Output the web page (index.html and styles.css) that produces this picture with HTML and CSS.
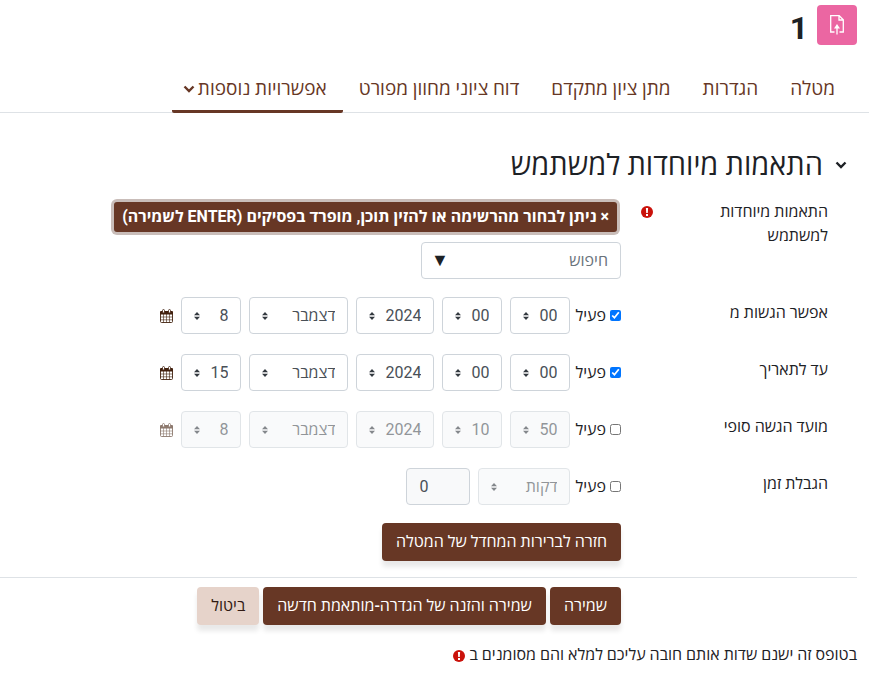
FILE: index.html
```html
<!DOCTYPE html>
<html lang="he" dir="rtl">
<head>
<meta charset="utf-8">
<meta name="viewport" content="width=device-width, initial-scale=1">
<title>התאמות מיוחדות למשתמש</title>
<link rel="stylesheet" href="styles.css">
</head>
<body>
<svg class="sprite" aria-hidden="true">
  <symbol id="calendar" viewBox="0 0 13 14">
    <path fill="currentColor" d="M1 2h11q1 0 1 1v2.500H0V3q0-1 1-1z"/>
    <path fill="none" stroke="currentColor" stroke-width=".9" d="M.5 5v7.500q0 1 1 1h10q1 0 1-1V5"/>
    <path fill="none" stroke="currentColor" stroke-width=".6" d="M3.500 5v8.500M6.500 5v8.500M9.500 5v8.500M.5 8h12M.5 10.800h12"/>
    <rect x="2.500" y=".5" width="2" height="3.500" rx="1" fill="#fff" stroke="currentColor" stroke-width=".8"/>
    <rect x="8.500" y=".5" width="2" height="3.500" rx="1" fill="#fff" stroke="currentColor" stroke-width=".8"/>
  </symbol>
  <symbol id="required" viewBox="0 0 12 12">
    <circle cx="6" cy="6" r="6" fill="#ca120b"/>
    <path fill="#fff" d="M4.900 2h2.200l-.3 5h-1.600zM5 8h2v2h-2z"/>
  </symbol>
  <symbol id="chevron" viewBox="0 0 12 8">
    <path d="M1.500 1.500L6 6l4.500-4.500" fill="none" stroke="currentColor" stroke-width="2.400"/>
  </symbol>
</svg>

<header class="page-header">
  <span class="activity-icon">
    <svg width="16" height="22" viewBox="0 0 16 22" fill="none" stroke="#fff" stroke-width="1.300">
      <path d="M5.500 18H1.700V1.700h8.500l4.100 4.100V18h-3.800M10 1.700v4.300h4.300M8 20.500v-8"/>
      <path fill="#fff" stroke="none" d="M8 10l3 4.500H5z"/>
    </svg>
  </span>
  <h1>1</h1>
</header>

<nav class="tabs">
  <a href="#">מטלה</a>
  <a href="#">הגדרות</a>
  <a href="#">מתן ציון מתקדם</a>
  <a href="#">דוח ציוני מחוון מפורט</a>
  <a href="#" class="active">אפשרויות נוספות<svg class="chevron"><use href="#chevron"/></svg></a>
</nav>

<form>
  <h2><svg class="chevron"><use href="#chevron"/></svg>התאמות מיוחדות למשתמש</h2>

  <div class="row tight top">
    <div class="row-label">
      <label for="user">התאמות מיוחדות למשתמש</label>
      <svg class="required"><use href="#required"/></svg>
    </div>
    <div class="picker">
      <button type="button" class="tag">× ניתן לבחור מהרשימה או להזין תוכן, מופרד בפסיקים (ENTER לשמירה)</button>
      <div class="search">
        <input id="user" type="text" placeholder="חיפוש">
        <span class="arrow">▼</span>
      </div>
    </div>
  </div>

  <div class="row">
    <div class="row-label"><span>אפשר הגשות מ</span></div>
    <div class="fields">
      <label class="check"><input type="checkbox" checked>פעיל</label>
      <select aria-label="דקה"><option>00</option></select>
      <select aria-label="שעה"><option>00</option></select>
      <select class="year" aria-label="שנה"><option>2024</option></select>
      <select class="month" aria-label="חודש"><option>דצמבר</option></select>
      <select aria-label="יום"><option>8</option></select>
      <a href="#" class="calendar" aria-label="לוח שנה"><svg><use href="#calendar"/></svg></a>
    </div>
  </div>

  <div class="row">
    <div class="row-label"><span>עד לתאריך</span></div>
    <div class="fields">
      <label class="check"><input type="checkbox" checked>פעיל</label>
      <select aria-label="דקה"><option>00</option></select>
      <select aria-label="שעה"><option>00</option></select>
      <select class="year" aria-label="שנה"><option>2024</option></select>
      <select class="month" aria-label="חודש"><option>דצמבר</option></select>
      <select aria-label="יום"><option>15</option></select>
      <a href="#" class="calendar" aria-label="לוח שנה"><svg><use href="#calendar"/></svg></a>
    </div>
  </div>

  <div class="row">
    <div class="row-label"><span>מועד הגשה סופי</span></div>
    <div class="fields">
      <label class="check"><input type="checkbox">פעיל</label>
      <select disabled aria-label="דקה"><option>50</option></select>
      <select disabled aria-label="שעה"><option>10</option></select>
      <select disabled class="year" aria-label="שנה"><option>2024</option></select>
      <select disabled class="month" aria-label="חודש"><option>דצמבר</option></select>
      <select disabled aria-label="יום"><option>8</option></select>
      <a href="#" class="calendar muted" aria-label="לוח שנה"><svg><use href="#calendar"/></svg></a>
    </div>
  </div>

  <div class="row tight">
    <div class="row-label"><label for="limit">הגבלת זמן</label></div>
    <div class="fields">
      <label class="check"><input type="checkbox">פעיל</label>
      <select disabled class="unit" aria-label="יחידת זמן"><option>דקות</option></select>
      <input id="limit" class="number" type="text" dir="ltr" value="0" disabled>
    </div>
  </div>

  <div class="actions">
    <button type="button" class="btn">חזרה לברירות המחדל של המטלה</button>
  </div>
  <hr>
  <div class="actions">
    <button type="submit" class="btn">שמירה</button>
    <button type="submit" class="btn">שמירה והזנה של הגדרה-מותאמת חדשה</button>
    <button type="button" class="btn light">ביטול</button>
  </div>
  <p class="note">בטופס זה ישנם שדות אותם חובה עליכם למלא והם מסומנים ב <svg class="required"><use href="#required"/></svg></p>
</form>
</body>
</html>
```
FILE: styles.css
```css
* { box-sizing: border-box; }

body {
  margin: 0;
  padding: 5px 33px 0 0;
  background: #fff;
  color: #1d2125;
  font: 16px/24px Roboto, "Open Sans", "Liberation Sans", sans-serif;
}

.sprite { display: none; }

button, input, select { font: inherit; margin: 0; }

.page-header { display: flex; align-items: center; gap: 9px; height: 40px; }

.activity-icon {
  display: flex;
  align-items: center;
  justify-content: center;
  width: 40px;
  height: 40px;
  border-radius: 4px;
  background: #eb66a2;
}

h1 { margin: 6px 0 0; font-size: 32px; line-height: 40px; font-weight: 700; }

.tabs {
  display: flex;
  margin: 20px -12px 0 0;
  padding-right: 18px;
  border-bottom: 1px solid #dee2e6;
  font-size: 19px;
}

.tabs a {
  display: flex;
  align-items: center;
  height: 48px;
  margin-bottom: -1px;
  padding: 2px 16px 0;
  border-bottom: 3px solid transparent;
  color: #673725;
  text-decoration: none;
  white-space: nowrap;
}

.tabs .active { padding-left: 11px; gap: 3px; border-color: #673725; border-radius: 2px; }

.chevron { width: 12px; height: 8px; flex: none; }

h2 {
  display: flex;
  align-items: center;
  gap: 12px;
  margin: 34px 0 16px;
  padding-right: 10px;
  font-size: 29px;
  line-height: 36px;
  font-weight: 400;
}

.row { display: flex; gap: 15px; margin-bottom: 20px; padding-right: 29px; }
.tight { margin-bottom: 18px; }

.row-label {
  display: flex;
  flex: none;
  justify-content: space-between;
  width: 192px;
  padding: 4px 0 0 5px;
}

.top .row-label { padding-top: 1px; }

.row-label label { max-width: 130px; }

.required { width: 12px; height: 12px; flex: none; }
.row-label .required { margin-top: 6px; }

.picker { padding-top: 3px; }

.tag {
  display: block;
  margin: 0 4px 10px 0;
  padding: 3px 8px;
  border: 0;
  border-radius: 3px;
  background: #673725;
  box-shadow: 0 0 0 3px #c9bdb9;
  color: #fff;
  font-weight: 700;
  white-space: nowrap;
}

.search { position: relative; width: 200px; }

.search input, select, .number {
  height: 37px;
  padding: 0 12px;
  border: 1px solid #ced4da;
  border-radius: 4px;
  background: #fff;
  color: #495057;
}

.search input { display: block; width: 100%; }
.search input::placeholder { color: #6a737b; opacity: 1; }

.arrow { position: absolute; left: 10px; top: 6px; font-size: 18px; }

.fields { display: flex; align-items: center; gap: 8px; }

.check { display: flex; align-items: center; gap: 4px; margin-left: -3px; }
.check input { width: 11px; height: 11px; }

select {
  appearance: none;
  width: 60px;
  background: #fff url("data:image/svg+xml,%3Csvg xmlns='http://www.w3.org/2000/svg' viewBox='0 0 6 8'%3E%3Cpath fill='%23343a40' d='M3 0L0 3.300h6zM3 8l3-3.300H0z'/%3E%3C/svg%3E") no-repeat 12px center / 6px 8px;
}

select:disabled { background-color: #f6f8f9; color: #495057; opacity: .6; }

.year { width: 78px; }
.month { width: 99px; }
.unit { width: 92px; }
.number { width: 64px; background: #f8f9fa; }

.calendar { display: flex; color: #42210f; }
.calendar svg { width: 13px; height: 14px; }
.muted { opacity: .6; }

.actions { display: flex; gap: 4px; padding-right: 236px; }

.btn {
  height: 38px;
  padding: 0 14px;
  border: 0;
  border-radius: 4px;
  background: #673725;
  box-shadow: 0 6px 5px rgba(0, 0, 0, .09);
  color: #fff;
  font-weight: 500;
  white-space: nowrap;
}

.light { background: #e6d3ca; color: #311a12; font-weight: 400; }

hr { margin: 16px 0 9px; border: 0; border-top: 1px solid #dee2e6; }

.note { margin: 18px 0 0; }
.note .required { vertical-align: -2px; }
```
